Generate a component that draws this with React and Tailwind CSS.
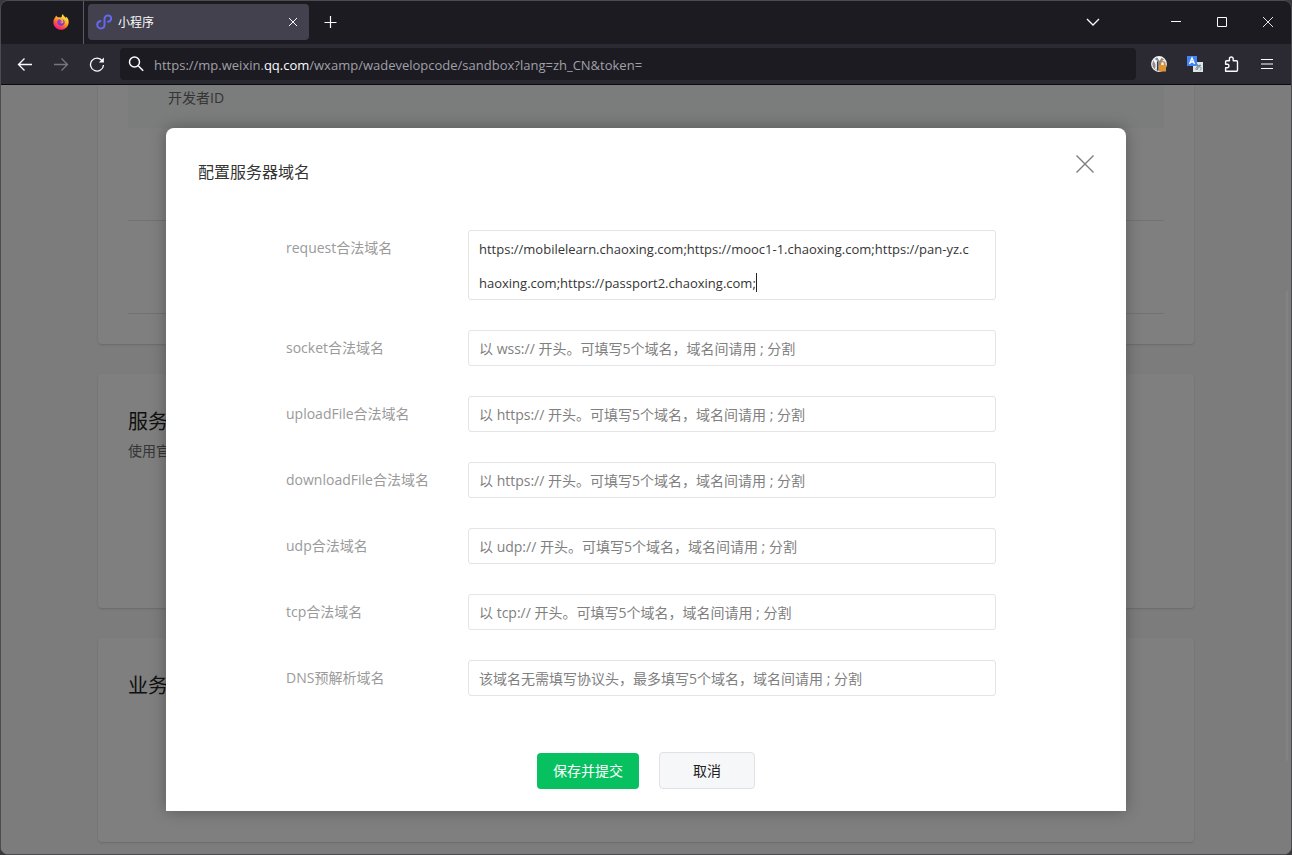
import { useState } from 'react';

const domainFields = [
    { id: 'socket', label: 'socket合法域名', placeholder: '以 wss:// 开头。可填写5个域名，域名间请用 ; 分割' },
    { id: 'uploadFile', label: 'uploadFile合法域名', placeholder: '以 https:// 开头。可填写5个域名，域名间请用 ; 分割' },
    { id: 'downloadFile', label: 'downloadFile合法域名', placeholder: '以 https:// 开头。可填写5个域名，域名间请用 ; 分割' },
    { id: 'udp', label: 'udp合法域名', placeholder: '以 udp:// 开头。可填写5个域名，域名间请用 ; 分割' },
    { id: 'tcp', label: 'tcp合法域名', placeholder: '以 tcp:// 开头。可填写5个域名，域名间请用 ; 分割' },
    { id: 'dns', label: 'DNS预解析域名', placeholder: '该域名无需填写协议头，最多填写5个域名，域名间请用 ; 分割' },
];

const Icon = ({ size = 16, className = '', children }) => (
    <svg width={size} height={size} viewBox={`0 0 ${size} ${size}`} fill="none" stroke="currentColor" className={`shrink-0 ${className}`} aria-hidden="true">
        {children}
    </svg>
);

const FirefoxLogo = () => (
    <svg width="16" height="16" viewBox="0 0 18 18" className="shrink-0" aria-hidden="true">
        <defs>
            <linearGradient id="flame" x1="0.85" y1="0.05" x2="0.3" y2="1">
                <stop offset="0" stopColor="#fff04a" />
                <stop offset="0.4" stopColor="#ffb321" />
                <stop offset="0.68" stopColor="#ff5a36" />
                <stop offset="1" stopColor="#f0128a" />
            </linearGradient>
            <linearGradient id="globe" x1="0" y1="0" x2="0" y2="1">
                <stop offset="0" stopColor="#a63be0" />
                <stop offset="1" stopColor="#6a3ad8" />
            </linearGradient>
        </defs>
        <path d="M2.6 3.6 3.400 1.800c.6 1 1.200 1.600 2.400 1.900 1-.2 1.800 0 2.400 .3L9.800 3.300C9.800 2 10.300 .9 11.300 .1c.2 1.500 1 2.400 2.200 3.200.5.400.9.800 1.200 1.300 0-.5 0-.9.300-1.500C16.900 4.700 17.900 7 17.600 9.800 17.200 14.200 13.600 17.700 9.100 17.700 4.300 17.700.4 13.900.4 9.200.4 6.900 1.200 5 2.600 3.600z" fill="url(#flame)" />
        <path d="M5.200 6.900c.9-1.100 2.300-1.100 3.200-.6-.1.900.6 1.300 2 1.400-.1.900-1.600 1-2.100 1.700-.2.600.3 1.200 1.200 1.300 1.400.1 2.500-.8 2.200-2.600-.2-1-.8-1.700-1.600-2.100 2 .1 3.200 1.700 3.100 3.600-.2 2.100-2 3.500-4.200 3.500-2.500 0-4.300-1.700-4.400-3.700 0-.9.200-1.800.6-2.500z" fill="url(#globe)" />
    </svg>
);

const MiniProgramLogo = () => (
    <Icon className="text-[#6467ef]">
        <path d="M4.600 6.900C2.700 7.200 1.200 8.700 1.200 10.700c0 2.100 1.700 3.700 3.700 3.700 2 0 3.600-1.500 3.600-3.600V5.100C8.500 3.100 10 1.500 12 1.500c1.700 0 3.100 1.300 3.100 3.100 0 1.700-1.200 2.900-3 3.200" strokeWidth="2" strokeLinecap="round" />
    </Icon>
);

const TitleBar = () => (
    <div className="flex h-11 items-stretch bg-[#1c1b22]">
        <div className="flex w-[83px] items-center justify-end border-r border-[#5b5b66] pr-3.5">
            <FirefoxLogo />
        </div>
        <div className="my-1 ml-1 flex w-[221px] items-center rounded bg-[#42414d] pl-2 pr-1">
            <MiniProgramLogo />
            <span className="ml-1.5 flex-1 pt-0.5 text-xs text-[#fbfbfe]">小程序</span>
            <button type="button" aria-label="关闭标签页" className="p-1">
                <Icon>
                    <path d="M4 4l8 8M12 4l-8 8" strokeWidth="1" />
                </Icon>
            </button>
        </div>
        <button type="button" aria-label="新建标签页" className="ml-3.5">
            <Icon>
                <path d="M7.500 2v12M1.500 8.500h12" strokeWidth="1.200" />
            </Icon>
        </button>
        <div className="flex-1"></div>
        <button type="button" aria-label="列出所有标签页" className="px-4">
            <Icon>
                <path d="M2 5l6 6 6-6" strokeWidth="1.300" />
            </Icon>
        </button>
        <div className="ml-9 flex">
            <button type="button" aria-label="最小化" className="px-[15px]">
                <Icon><path d="M3 7.500h10" /></Icon>
            </button>
            <button type="button" aria-label="最大化" className="px-[15px]">
                <Icon><path d="M3.500 3.500h9v9h-9z" /></Icon>
            </button>
            <button type="button" aria-label="关闭" className="px-[15px]">
                <Icon><path d="M3 3l10 10M13 3L3 13" strokeWidth=".9" /></Icon>
            </button>
        </div>
    </div>
);

const NavBar = () => (
    <div className="flex h-[41px] items-center border-b border-[#0c0c0d] bg-[#2b2a33] pl-4 pr-4">
        <button type="button" aria-label="后退">
            <Icon><path d="M15 8.500H1.500M7.500 2.500l-6 6 6 6" strokeWidth="1.300" /></Icon>
        </button>
        <button type="button" aria-label="前进" className="ml-5 text-[#77767e]">
            <Icon><path d="M1 8.500h13.500M8.500 2.500l6 6-6 6" strokeWidth="1.300" /></Icon>
        </button>
        <button type="button" aria-label="刷新" className="ml-5">
            <Icon>
                <path d="M13.300 4.800A6.500 6.500 0 1 0 14.500 9" strokeWidth="1.300" />
                <path d="M14.900 1.500v5H9.900z" fill="currentColor" stroke="none" />
            </Icon>
        </button>
        <div className="ml-[15px] flex h-8 flex-1 items-center rounded bg-[#1c1b22] pl-2">
            <Icon>
                <circle cx="6.500" cy="6" r="5" strokeWidth="1.500" />
                <path d="M10.200 9.700l5 5" strokeWidth="1.600" />
            </Icon>
            <div className="ml-2.5 pt-0.5 text-[13px] leading-5 text-[#a0a0a8]">
                https://mp.weixin.<span className="text-[#fbfbfe]">qq.com</span>/wxamp/wadevelopcode/sandbox?lang=zh_CN&amp;token=
            </div>
        </div>
        <div className="ml-[15px] flex items-center gap-5">
            <button type="button" aria-label="脚本管理">
                <Icon>
                    <circle cx="8" cy="8" r="7.300" fill="#8b8b90" stroke="#f4f4f4" strokeWidth="1.200" />
                    <path d="M3 2.500L6.500 5v9L4 13c1-3 .8-6-1.500-8zM6 1h5L8.500 5zM13.500 3L10 6v4l4-1z" fill="#f7f7f7" stroke="none" />
                    <path d="M6.500 5.500v9" stroke="#3a3940" strokeWidth="1.200" />
                    <path d="M9.600 9V7.500a1.900 1.900 0 0 1 3.800 0V9" stroke="#c98532" strokeWidth="1.300" />
                    <path d="M8 9h7v6.500H8z" fill="#e0932f" stroke="none" />
                </Icon>
            </button>
            <button type="button" aria-label="翻译">
                <Icon>
                    <path d="M6 6h10v10H6z" fill="#dfe4e6" stroke="none" />
                    <path d="M8 9.500h6M10.500 8c-.5 3 0 4 0 5.500M13 8.500c-.5 3-2 5-4 5-1-1 1-3 3-3s3 2 1 4" stroke="#6f8c96" strokeWidth=".9" />
                    <path d="M0 0h10v10H0z" fill="#4285f4" stroke="none" />
                    <path d="M2.500 8L5 2l2.500 6M3.500 6h3" stroke="#fff" strokeWidth="1.300" />
                </Icon>
            </button>
            <button type="button" aria-label="扩展">
                <Icon>
                    <path d="M2.600 15.200h10.900a1 1 0 0 0 1-1V5.800a1 1 0 0 0-1-1H10.200V2.900a1.900 1.900 0 0 0-3.800 0v1.900H3.600a1 1 0 0 0-1 1V8.300h1.700a1.700 1.700 0 0 1 0 3.400H2.600z" strokeWidth="1.400" strokeLinejoin="round" />
                </Icon>
            </button>
            <button type="button" aria-label="打开应用程序菜单">
                <Icon><path d="M2 3.500h12M2 8h12M2 12.500h12" strokeWidth="1.200" /></Icon>
            </button>
        </div>
    </div>
);

const Panel = ({ className = '', children }) => (
    <section className={`rounded bg-white px-[30px] shadow-[0_1px_2px_rgba(0,0,0,0.15)] ${className}`}>{children}</section>
);

const SettingsPage = () => (
    <div className="mx-auto flex max-w-[1096px] flex-col gap-[30px] text-sm text-[#6b6b6b]">
        <Panel className="h-[259px] rounded-t-none">
            <div className="h-[43px] bg-[#f6f8f9] px-10 pt-px leading-6">开发者ID</div>
            <div className="h-[93px] border-b border-[#e4e4e4]"></div>
            <div className="h-[93px] border-b border-[#e4e4e4]"></div>
        </Panel>
        <Panel className="h-[234px] pt-[34px]">
            <h2 className="text-xl leading-7 text-[#222]">服务器域名</h2>
            <p className="mt-[3px] leading-6">使用官方推荐的云开发，无需配置服务器域名</p>
        </Panel>
        <Panel className="h-[204px] pt-[34px]">
            <h2 className="text-xl leading-7 text-[#222]">业务域名</h2>
        </Panel>
    </div>
);

const FieldRow = ({ id, label, children }) => (
    <div className="flex items-start">
        <label htmlFor={id} className="w-[182px] shrink-0 leading-9 text-[#9a9a9a]">{label}</label>
        {children}
    </div>
);

const DomainDialog = () => {
    const [values, setValues] = useState({
        request: 'https://mobilelearn.chaoxing.com;https://mooc1-1.chaoxing.com;https://pan-yz.chaoxing.com;https://passport2.chaoxing.com;',
    });

    const handleChange = (e) => setValues({ ...values, [e.target.id]: e.target.value });

    return (
        <div role="dialog" aria-labelledby="dialog-title" className="w-full max-w-[960px] rounded-t-lg bg-white text-sm shadow-[0_0_16px_rgba(0,0,0,0.3)]">
            <div className="flex items-center justify-between px-8 pt-6">
                <h1 id="dialog-title" className="pt-2 text-base text-[#353535]">配置服务器域名</h1>
                <button type="button" aria-label="关闭对话框" className="pb-2 text-[#7c7d80]">
                    <Icon size={18}><path d="M0.500 0.500l17 17M17.500 0.500l-17 17" strokeWidth="1.400" /></Icon>
                </button>
            </div>
            <form onSubmit={(e) => e.preventDefault()}>
                <div className="flex flex-col gap-[30px] pl-[120px] pr-[130px] pt-[46px]">
                    <FieldRow id="request" label="request合法域名">
                        <div className="relative flex-1">
                            <textarea
                                id="request"
                                rows={2}
                                value={values.request}
                                onChange={handleChange}
                                className="block h-[70px] w-full resize-none overflow-hidden break-all rounded-[3px] border border-[#e4e4e6] pl-2.5 pr-5 pt-px text-[13px] leading-[34px] text-[#353535] outline-none"
                            />
                            {/* text cursor */}
                            <span className="absolute left-72 top-[43px] h-[19px] w-px bg-[#222]"></span>
                        </div>
                    </FieldRow>
                    {domainFields.map((field) => (
                        <FieldRow key={field.id} id={field.id} label={field.label}>
                            <input
                                id={field.id}
                                type="text"
                                placeholder={field.placeholder}
                                value={values[field.id] || ''}
                                onChange={handleChange}
                                className="h-9 flex-1 rounded-[3px] border border-[#e4e4e6] px-2.5 text-[#353535] outline-none placeholder:text-[#808080]"
                            />
                        </FieldRow>
                    ))}
                </div>
                <div className="flex items-center justify-center gap-5 pb-[22px] pt-14">
                    <button type="submit" className="h-9 rounded bg-[#07c160] px-4 text-white">保存并提交</button>
                    <button type="button" className="h-[37px] w-24 rounded border border-[#e0e1e4] bg-[#f6f7f9] text-[#222]">取消</button>
                </div>
            </form>
        </div>
    );
};

const App = () => (
    <div className="h-screen overflow-hidden bg-[#3a3a3d] font-['Open_Sans','Noto_Sans_CJK_SC',sans-serif]">
        <div className="flex h-full flex-col overflow-hidden rounded-lg border border-[#4c4c50]">
            <header className="-mt-px shrink-0 text-[#fbfbfe]">
                <TitleBar />
                <NavBar />
            </header>
            <main className="relative flex-1 overflow-hidden bg-[#f8f8f8]">
                <SettingsPage />
                <div className="absolute inset-0 flex items-start justify-center bg-black/50 pt-[43px]">
                    <DomainDialog />
                    <div className="absolute right-[3px] top-[206px] h-[470px] w-0.5 rounded bg-white/5"></div>
                </div>
            </main>
        </div>
    </div>
);

export default App;
